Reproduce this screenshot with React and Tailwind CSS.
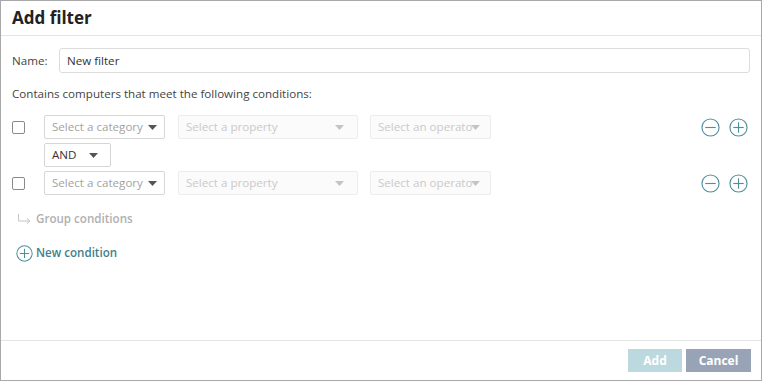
import React from 'react';

// Small filled caret used in the dropdowns
function Caret({ className }) {
  return (
    <svg width="9" height="5" viewBox="0 0 9 5" className={className}>
      <path d="M0 0h9L4.5 5z" fill="currentColor" />
    </svg>
  );
}

function CircleIcon({ plus = false, size = 19 }) {
  return (
    <svg width={size} height={size} viewBox="0 0 20 20" className="text-[#4f8f9b]">
      <circle cx="10" cy="10" r="9" fill="none" stroke="currentColor" strokeWidth="1.2" />
      <path d="M4.5 10h11" stroke="currentColor" strokeWidth="1.2" />
      {plus && <path d="M10 4.5v11" stroke="currentColor" strokeWidth="1.2" />}
    </svg>
  );
}

function ConditionRow() {
  return (
    <div className="flex items-center h-[24px]">
      {/* checkbox */}
      <div className="w-[13px] h-[13px] rounded-[2px] border border-[#8a8a8a] bg-white" />

      {/* category */}
      <div className="ml-[19px] w-[121px] h-[24px] border border-[#d6d6d6] rounded-[2px] flex items-center pl-[7px] text-[#a3a3a3]">
        <span className="whitespace-nowrap">Select a category</span>
        <Caret className="ml-[5px] text-[#555] shrink-0" />
      </div>

      {/* property (disabled) */}
      <div className="ml-[13px] w-[180px] h-[24px] border border-[#ededed] bg-[#fbfbfb] rounded-[2px] flex items-center justify-between pl-[7px] pr-[13px] text-[#cacaca]">
        <span>Select a property</span>
        <Caret className="text-[#c4c4c4]" />
      </div>

      {/* operator (disabled) */}
      <div className="ml-[12px] w-[121px] h-[24px] border border-[#ededed] bg-[#fbfbfb] rounded-[2px] flex items-center pl-[7px] text-[#cacaca]">
        <span className="whitespace-nowrap">Select an operato</span>
        <Caret className="-ml-[1px] text-[#c4c4c4] shrink-0" />
      </div>

      <div className="ml-auto flex items-center gap-[9px] mr-[2px]">
        <CircleIcon />
        <CircleIcon plus />
      </div>
    </div>
  );
}

export default function App() {
  return (
    <div
      className="w-[762px] h-[381px] bg-white border border-[#a8a8a8] flex flex-col text-[11.6px] text-[#333]"
      style={{ fontFamily: '"Open Sans", "Noto Sans", sans-serif' }}
    >
      {/* Header */}
      <div className="h-[35px] shrink-0 border-b border-[#e3e3e3] flex items-center px-[11px]">
        <h1 className="text-[17px] font-bold text-[#222] leading-none -mt-[2px]">Add filter</h1>
      </div>

      {/* Body */}
      <div className="flex-1 px-[11px] pt-[12px]">
        <div className="flex items-center">
          <span className="w-[47px] text-[#444]">Name:</span>
          <div className="flex-1 h-[25px] border border-[#dcdcdc] rounded-[3px] flex items-center px-[7px] text-[#333]">
            New filter
          </div>
        </div>

        <p className="mt-[13px] leading-[16px] text-[#444]">Contains computers that meet the following conditions:</p>

        <div className="mt-[13px] flex flex-col gap-[4px]">
          <ConditionRow />
          <div className="ml-[32px] w-[67px] h-[24px] border border-[#d6d6d6] rounded-[2px] flex items-center justify-between pl-[7px] pr-[12px] text-[#333]">
            <span>AND</span>
            <Caret className="text-[#555]" />
          </div>
          <ConditionRow />
        </div>

        <div className="mt-[15px] flex items-center ml-[5px] text-[#b0b0b0]">
          <svg width="15" height="12" viewBox="0 0 15 12" className="mr-[4px]">
            <path d="M1.5 1v7h11" fill="none" stroke="#c4c4c4" strokeWidth="1" />
            <path d="M10 5.5l3 2.5-3 2.5" fill="none" stroke="#c4c4c4" strokeWidth="1" />
          </svg>
          <span className="font-semibold">Group conditions</span>
        </div>

        <div className="mt-[17px] flex items-center ml-[4px] text-[#3f7f8c]">
          <CircleIcon plus size={17} />
          <span className="ml-[3px] font-semibold">New condition</span>
        </div>
      </div>

      {/* Footer */}
      <div className="h-[40px] shrink-0 border-t border-[#e3e3e3] flex items-center justify-end gap-[4px] px-[10px]">
        <button className="w-[54px] h-[23px] bg-[#bcd9e0] text-white font-bold text-[12px]">Add</button>
        <button className="w-[65px] h-[23px] bg-[#98a4b6] text-white font-bold text-[12px]">Cancel</button>
      </div>
    </div>
  );
}
